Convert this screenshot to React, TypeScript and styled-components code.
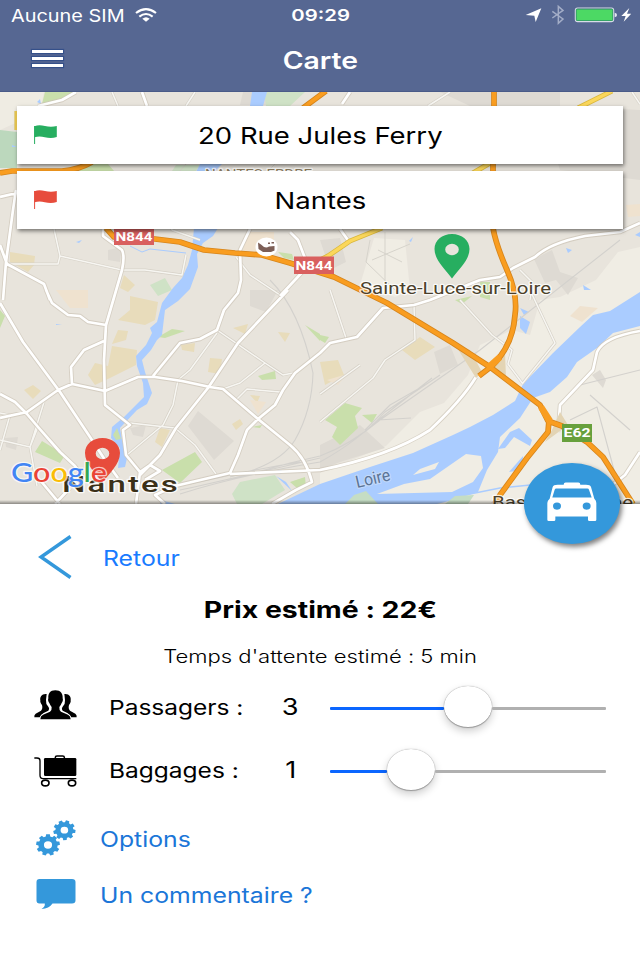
import { ReactNode, useState } from 'react'
import styled, { createGlobalStyle } from 'styled-components'

const SANS = "Inter, 'Liberation Sans', sans-serif"

interface Range {
  min: number
  max: number
}

const PASSENGERS: Range = { min: 1, max: 5 }
const BAGGAGES: Range = { min: 0, max: 4 }

export function App() {
  const [passengers] = useState(3)
  const [baggages] = useState(1)

  return (
    <>
      <GlobalStyle />
      <Screen>
        <Header>
          <StatusBar>
            <StatusLeft>
              <Text $size={16.8} $stretch={1.185}>
                Aucune SIM
              </Text>
              <WifiIcon />
            </StatusLeft>
            <Text $size={16.4} $weight={600} $origin="center" $stretch={1.24}>
              09:29
            </Text>
            <StatusIcons />
          </StatusBar>
          <NavBar>
            <Burger>
              <i />
              <i />
              <i />
            </Burger>
            <Text as="h1" $size={23.6} $weight={600} $origin="center" $stretch={1.2}>
              Carte
            </Text>
          </NavBar>
        </Header>

        <MapArea>
          <CityMap />
          <Addresses>
            <Address color="#27ae60">20 Rue Jules Ferry</Address>
            <Address color="#e74c3c">Nantes</Address>
          </Addresses>
          <MapEdge />
          <OrderButton aria-label="Commander">
            <TaxiIcon />
          </OrderButton>
        </MapArea>

        <Panel>
          <BackRow>
            <svg width="34" height="44" viewBox="0 0 34 44">
              <path d="M32.5 1.5 3 22 32.5 42.5" fill="none" stroke="#3498db" strokeWidth="3.4" />
            </svg>
            <Text $size={21} $color="#187bff">
              Retour
            </Text>
          </BackRow>
          <Price>
            <Text $size={23} $weight={700} $origin="center" $stretch={1.235}>
              Prix estimé : 22€
            </Text>
          </Price>
          <Wait>
            <Text $size={18} $weight={300} $origin="center" $stretch={1.225}>
              Temps d'attente estimé : 5 min
            </Text>
          </Wait>
          <Quantity icon={<PeopleIcon />} label="Passagers :" value={passengers} range={PASSENGERS} />
          <Quantity icon={<LuggageIcon />} label="Baggages :" value={baggages} range={BAGGAGES} />
          <Links>
            <LinkRow>
              <GearsIcon />
              <Text $size={21} $color="#1b76d8">
                Options
              </Text>
            </LinkRow>
            <LinkRow>
              <CommentIcon />
              <Text $size={21} $color="#1b76d8">
                Un commentaire ?
              </Text>
            </LinkRow>
          </Links>
        </Panel>
      </Screen>
    </>
  )
}

function Address({ color, children }: { color: string; children: ReactNode }) {
  return (
    <AddressCard>
      <svg width="24" height="20" viewBox="0 0 24 20">
        <path d="M.6 1V19" stroke={color} strokeWidth="1" />
        <path d="M.4 1.2C4-.2 7 0 11 1S19 2 22.8 1V12c-4 1.400-8 1.300-12 .2S4 11.200 .4 12.200Z" fill={color} />
      </svg>
      <Text $size={23} $origin="center" $stretch={1.195}>
        {children}
      </Text>
    </AddressCard>
  )
}

function Quantity({ icon, label, value, range }: { icon: ReactNode; label: string; value: number; range: Range }) {
  const ratio = (value - range.min) / (range.max - range.min)

  return (
    <QuantityRow>
      {icon}
      <Text $size={20.5} $stretch={1.195}>
        {label}
      </Text>
      <Value>
        <Text $size={23} $origin="center">
          {value}
        </Text>
      </Value>
      <Slider role="slider" aria-valuemin={range.min} aria-valuemax={range.max} aria-valuenow={value}>
        <Track $color="#0b66ff" style={{ width: `calc((100% - 48px) * ${ratio})` }} />
        <Thumb />
        <Track $color="#b0b0b0" $grow />
      </Slider>
    </QuantityRow>
  )
}

function WifiIcon() {
  return (
    <svg width="22" height="14" viewBox="0 0 66 42">
      <g fill="none" stroke="#fff" strokeWidth="6.5">
        <path d="M3 15Q33-8 63 15" />
        <path d="M13 26Q33 10 53 26" />
      </g>
      <path d="M22 32Q33 23 44 32L33 41Z" fill="#fff" />
    </svg>
  )
}

function StatusIcons() {
  return (
    <svg width="108" height="22" viewBox="0 0 324 66">
      <path d="M8 33 55 13 38 54 34 35Z" fill="#fff" />
      <path d="M88 22 120 45 106 58V7L120 19 88 42" fill="none" stroke="#a3adc7" strokeWidth="4.5" />
      <rect x="157" y="12" width="115" height="41" rx="7" fill="none" stroke="#d8dce8" strokeWidth="3.4" />
      <rect x="160" y="15.500" width="109" height="34" rx="2" fill="#4cd964" stroke="#28a85c" strokeWidth="2" />
      <path d="M275 26q7 1 7 7t-7 7Z" fill="#e5e8f0" />
      <path d="M319 12 295 36H308L302 53 325 29H312Z" fill="#fff" />
    </svg>
  )
}

function TaxiIcon() {
  return (
    <svg width="50" height="39.5" viewBox="0 0 150 118">
      <path
        fillRule="evenodd"
        fill="#fff"
        d="M50 8Q50 1 56 1H94Q100 1 100 8H117Q130 8 132 15L142 50Q148 55 148 63V113Q148 117 144 117H127Q123 117 123 113V103H25V113Q25 117 21 117H5Q1 117 1 113V63Q1 55 8 50L17 15Q19 8 32 8ZM28 19Q24 19 23 23L16 46H134L126 23Q125 19 121 19ZM18 72a12 11 0 1 0 24 0 12 11 0 1 0-24 0ZM107 72a12 11 0 1 0 24 0 12 11 0 1 0-24 0Z"
      />
    </svg>
  )
}

function PeopleIcon() {
  return (
    <svg width="43" height="36" viewBox="0 0 129 108">
      <path d="M38 12C24 10 17 20 19 31C18 37 21 41 24 45Q27 56 21 62L5 71Q0 75 1 82H18Q20 74 29 69L43 62Q48 56 42 49Q35 42 36 30Z" />
      <path d="M91 12C105 10 112 20 110 31C111 37 108 41 105 45Q102 56 108 62L124 71Q129 75 128 82H111Q109 74 100 69L86 62Q81 56 87 49Q94 42 93 30Z" />
      <path
        d="M64 1C48 1 42 11 43 25C41 30 43 36 46 39Q49 47 53 51Q54 61 48 65L27 74Q19 78 19 88H110Q110 78 102 74L81 65Q75 61 76 51Q80 47 83 39C86 36 88 30 86 25C87 11 80 1 64 1Z"
        stroke="#fff"
        strokeWidth="5"
        paintOrder="stroke"
      />
    </svg>
  )
}

function LuggageIcon() {
  return (
    <svg width="43" height="32" viewBox="0 0 129 96">
      <g fill="none" stroke="#000" strokeWidth="4">
        <path d="M1 9H9Q18 9 18 17V61Q18 71 27 71H127" />
        <ellipse cx="34" cy="84" rx="11" ry="8.500" strokeWidth="5" />
        <ellipse cx="114" cy="84" rx="11" ry="8.500" strokeWidth="5" />
        <path d="M64 12V7Q64 3 69 3H86Q91 3 91 7V12" strokeWidth="4.500" />
      </g>
      <rect x="30" y="9" width="97" height="54" rx="4" />
    </svg>
  )
}

function gearPath(cx: number, cy: number, rx: number, ry: number, turn: number) {
  const teeth = 9
  const steps: [number, number][] = [
    [-0.34, 0.8],
    [-0.22, 1],
    [0.22, 1],
    [0.34, 0.8],
  ]
  const points: string[] = []
  for (let i = 0; i < teeth; i++) {
    steps.forEach(([offset, r]) => {
      const a = ((i + offset) / teeth) * Math.PI * 2 + turn
      points.push(`${(cx + Math.sin(a) * rx * r).toFixed(2)} ${(cy - Math.cos(a) * ry * r).toFixed(2)}`)
    })
  }
  const hx = rx * 0.34
  const hy = ry * 0.34
  return `M${points.join('L')}ZM${cx - hx} ${cy}a${hx} ${hy} 0 1 0 ${hx * 2} 0a${hx} ${hy} 0 1 0 ${-hx * 2} 0Z`
}

function GearsIcon() {
  return (
    <svg width="40" height="36" viewBox="0 0 40 36" fill="#3498db" fillRule="evenodd">
      <path d={gearPath(12, 25, 12, 10.8, 0)} />
      <path d={gearPath(28.4, 10.2, 11.2, 10, 0.3)} />
    </svg>
  )
}

function CommentIcon() {
  return (
    <svg width="40" height="30" viewBox="0 0 40 30">
      <path
        d="M3.500 0H36Q39.500 0 39.500 3V21.500Q39.500 24.500 36 24.500H16.500Q13 29.800 5.500 29.900Q9.300 28 8.800 24.500H3.500Q.5 24.500 .5 21.500V3Q.5 0 3.500 0Z"
        fill="#3498db"
      />
    </svg>
  )
}

const MAJOR_ROADS = [
  'M0 303 23 342 60 392 90 437 105 460 118 478',
  'M0 394 15 402 27 414 38 427 60 452 75 466 85 480',
  'M0 418 27 412 58 390 72 384 105 391 138 377 155 377 182 381 210 387 223 389 258 419 290 445Q306 458 312 482L296 490 272 504',
  'M103 229V236L122 250Q125 256 122 270L106 325 104 360 105 405 130 425 123 430 126 455 140 472 136 504',
  'M72 384 71 367 84 350 104 341',
  'M46 290 52 303 68 315 80 316 88 322 106 325',
  'M153 376 180 343 200 339 217 330 224 310 238 293 241 280 240 250 250 229',
  'M288 290 238 343 208 388 176 428 160 455 140 475',
  'M280 296 308 266 298 240 290 232',
  'M258 419 275 405 283 390 295 373 320 353 330 343 357 337 383 308 414 305 430 300 460 288 480 280 500 277 513 268 535 257Q550 243 585 236L620 232 640 223',
  'M258 419 247 430 238 455 230 473 175 486 155 495 165 504',
  'M476 377Q462 400 430 430Q390 456 320 470L230 474',
  'M640 331Q604 337 597 352L593 370 560 405 558 432',
  'M640 452 625 475 606 490',
  'M16 190 13 210 6 262 3 300',
  'M0 245 7 264 44 284 50 300',
  'M0 197 17 193',
  'M38 106 62 100 76 92',
  'M142 92 147 106',
  'M342 104 350 92',
  'M340 229 350 243',
  'M140 472 150 465 160 471 145 480',
  'M40 480 60 504 M70 488 55 504',
]

const MINOR_ROADS = [
  'M54 229 60 256 122 270 145 270 182 275 186 255',
  'M60 256 58 264 7 264',
  'M217 333 190 370 178 380 173 405 163 425 127 455',
  'M217 330 265 363 283 375 293 373',
  'M265 363 240 383 223 389',
  'M130 423 175 428 195 445 216 474',
  'M38 427 30 447 37 486',
  'M30 447 0 440',
  'M44 402 30 447',
  'M0 413 10 415 0 450',
  'M320 422 373 378 385 360 415 340 414 305',
  'M330 290 346 338',
  'M460 300 492 335 512 350 508 364 523 384',
  'M530 290 555 343 522 384',
  'M520 270 532 282 530 300',
  'M428 106 450 92',
  'M236 257 250 275 280 295',
  'M186 106 195 92',
  'M320 394 360 365',
  'M236 400 247 389 280 392',
  'M632 92 640 104',
  'M112 92 118 106',
  'M165 210 172 230 200 240',
]

const RAILS = [
  'M270 280Q300 310 313 373Q312 410 295 440Q280 465 230 477',
  'M180 490Q230 480 290 463L320 456Q350 445 380 420L480 350 620 240',
  'M180 494Q240 475 320 462Q360 440 385 412L440 375',
  'M190 484Q250 470 300 462M190 488 260 472 320 458',
  'M365 430 390 405 425 385M372 425 400 403 432 378M378 420 411 418',
  'M570 420 597 407 614 470M590 395 630 430M580 385 640 370',
]

const TAN_AREAS = [
  'M130 296 158 302 155 320 145 325 118 320 130 310Z',
  'M112 346 137 350 136 365 110 378 95 385 88 375 95 363 108 366Z',
  'M118 330 128 331 126 340 112 344Z',
  'M24 390 33 385 41 391 33 399Z',
  'M10 252 35 256 34 265 28 272 10 262Z',
  'M124 275 135 285 128 292 120 288Z',
  'M181 345 195 343 194 352 182 350Z',
  'M210 358 222 359 220 374 208 372Z',
  'M160 428 170 430 162 447 155 442Z',
  'M233 328 248 324 245 334Z',
  'M278 332 290 333 285 342Z',
  'M402 350 420 337 435 347 415 360Z',
  'M320 362 338 360 344 375 325 385Z',
  'M232 424 240 419 243 424 236 430Z',
  'M250 395 260 396 257 403Z',
]

const GREEN_AREAS = [
  'M45 92H76L62 99 42 104Z',
  'M88 164H108L114 171H70Z',
  'M35 452 42 441 65 455 60 463Z',
  'M162 470 195 452 202 462 180 483Z',
  'M158 337 172 329 185 331 165 338Z',
  'M258 376 275 371 276 379 262 380Z',
  'M290 482 305 477 306 487 298 489Z',
  'M320 335 329 337 325 343 320 340Z',
  'M325 420 345 403 362 408 355 416 358 428 340 445 332 437 337 427Z',
  'M362 415 377 414 372 423Z',
  'M305 325 320 334V341Z',
  'M480 282 490 282 490 300 480 297Z',
  'M455 300 472 296 462 304Z',
  'M278 252 292 254 294 260 284 258Z',
  'M252 427 262 425 260 428Z',
  'M0 310 5 316 0 328Z',
]

const GREY_AREAS = [
  'M188 426 198 411 234 441 214 460Z',
  'M108 250 122 247 120 262 108 260Z',
  'M250 290 278 290 266 312 250 306Z',
  'M130 428 146 425 143 437 133 435Z',
  'M5 438 18 437 16 450 6 447Z',
  'M243 92H300L285 105H240Z',
  'M440 92H560V106H470Z',
  'M534 259 552 250 560 272 578 278 568 295 556 280 545 283Z',
  'M434 352 450 345 458 365 440 374Z',
  'M320 445 360 425 385 448 340 462 320 470Z',
  'M540 105 640 110V180L560 170Z',
  'M592 375 600 370 606 380 603 388Z',
  'M320 240 340 238 346 262 330 270Z',
]

const ORANGE_ROADS = [
  'M0 173 12 171H62Q78 170 92 162',
  'M106 228 114 237 155 239 180 242 204 250 235 253 262 255 290 263 334 277 387 303 453 343 490 367 540 405 548 421 562 426 587 442 603 457 633 504',
  'M549 420 548 432 527 458 500 495 494 504',
  'M494 92V106M493 164V171M493 228Q496 245 507 270T515 315Q513 345 492 366L479 376',
  'M326 91 303 108',
]

const YELLOW_ROADS = ['M612 91 578 108', 'M490 163 473 173', 'M382 228 350 241 328 256 320 260', 'M17 111V130']

function Strokes({ paths, color, width, opacity = 1 }: { paths: string[]; color: string; width: number; opacity?: number }) {
  return (
    <path d={paths.join('')} fill="none" stroke={color} strokeWidth={width} strokeOpacity={opacity} strokeLinejoin="round" />
  )
}

function Badge({ x, y, width, height, color, label }: { x: number; y: number; width: number; height: number; color: string; label: string }) {
  return (
    <g>
      <rect x={x} y={y} width={width} height={height} fill={color} />
      <text
        x={x + 1.5}
        y={y + height / 2 + 4.4}
        textLength={width - 3}
        lengthAdjust="spacingAndGlyphs"
        fontFamily="Roboto, sans-serif"
        fontWeight="700"
        fontSize="12.5"
        fill="#fff"
      >
        {label}
      </text>
    </g>
  )
}

function Pin({ x, y, color }: { x: number; y: number; color: string }) {
  return (
    <path
      transform={`translate(${x} ${y})`}
      fillRule="evenodd"
      fill={color}
      d="M0 0C-10 0-17.500 6.500-17.500 15C-17.500 26-7 35-0 44.500C7 35 17.500 26 17.500 15C17.500 6.500 10 0 0 0ZM-6.800 15.500a6.800 5.700 0 1 0 13.600 0a6.800 5.700 0 1 0-13.600 0Z"
    />
  )
}

function CityMap() {
  return (
    <MapSvg viewBox="0 92 640 412">
      <rect y="92" width="640" height="412" fill="#e8e4dc" />
      <path d="M0 92H44L40 112 0 130Z" fill="#efece3" />
      <path d="M0 130 17 132V168H0Z" fill="#bcd8bd" />
      <path
        d="M640 247 618 252 596 280 560 297 540 300 530 335 512 330 480 345 468 375 444 403 420 412 386 446 320 473V504H640ZM374 238 405 240 410 290 395 297 360 285Z"
        fill="#f0ede4"
      />
      <path d="M505 102 540 92 552 98 530 105Z" fill="#efece3" />
      <path d={GREY_AREAS.join('')} fill="#dedad3" />
      <path d={TAN_AREAS.join('')} fill="#e8dcbb" />
      <path
        d="M56 290 88 290 88 308 70 308ZM248 232H274V248L255 254 243 250ZM570 316 580 306 598 308 582 322ZM250 400 266 402 258 414ZM327 380 347 374 338 385ZM626 205 640 204V216L628 217Z"
        fill="#efe2cf"
      />
      <path d={GREEN_AREAS.join('')} fill="#c9dfab" />
      <path
        d="M232 494 240 482 275 475 285 490 262 504H237ZM264 92H305L290 106H266ZM176 165H200L196 171H172ZM150 285 165 278 172 290 158 296Z"
        fill="#cfe2c6"
      />

      <g fill="#aaccff">
        <path d="M252 92H267L263 106H250Z" />
        <path d="M200 164H222L214 172H196Z" />
        <path d="M194 228H218L213 236 203 243 197 254 198 267 190 289 178 301 165 310 162 335 157 340 151 350 142 360 145 372 152 393 147 404 137 410 120 428 122 440 127 458 125 467 118 468 120 448 111 438 112 427 124 417 144 397 143 383 137 366 136 356 146 345 152 333 150 328 157 322 162 303 173 288 182 278 188 265 192 250Z" />
        <path
          fillRule="evenodd"
          d="M640 292 610 311 593 315 580 327 553 353 523 384 515 401 493 415 470 427 453 435 413 453 370 467 320 484 278 504H437L453 500 478 492 487 470 498 452 500 437 520 418 533 398 550 392 567 377 577 362 597 348 613 333 640 326ZM481 456 466 454 453 463 430 479 404 484 377 494 452 492 473 482 483 468ZM413 475 420 469 439 462 435 469Z"
        />
        <path d="M519 428 532 440 530 446 514 437 505 448 498 449 510 432ZM509 472 523 456 522 470ZM520 316 530 322 526 334 520 328ZM520 308 529 312 524 315Z" />
        <path d="M277 470 282 470 281 474ZM286 482 276 476 292 491ZM161 500 175 504H160ZM583 285 591 290 584 290ZM566 248 572 250 568 253ZM635 235 640 232V237ZM76 242 82 240 79 243ZM12 145 17 147H12ZM56 324 62 325H56ZM37 102 40 99 41 104ZM409 241 413 237 411 242Z" />
        <path d="M130 246 142 252 150 249 186 253" fill="none" stroke="#aaccff" strokeWidth="1" />
        <path d="M460 496 500 488 560 482" fill="none" stroke="#aaccff" strokeWidth="1.500" />
      </g>
      <path d="M113 435 117 428 121 439 116 440Z" fill="#c9dfab" />
      <path d="M345 504 354 495 366 491 378 504ZM445 504 455 496 474 495 468 504Z" fill="#c5ddc4" />

      <Strokes paths={RAILS} color="#d3d1cd" width={1.1} />
      <Strokes
        paths={['M372 260 410 244M370 240 366 262 395 290M378 250 402 262M385 232V290M180 171 186 164M268 171 275 164']}
        color="#d6d3cb"
        width={1}
      />
      <Strokes paths={MINOR_ROADS} color="#d6d1c7" width={2.8} />
      <Strokes paths={MINOR_ROADS} color="#f7f6f2" width={1.5} />
      <Strokes paths={MAJOR_ROADS} color="#cdc6b8" width={4.4} opacity={0.75} />
      <Strokes paths={MAJOR_ROADS} color="#fff" width={2.7} />
      <path
        d="M454 343 470 350 482 372 476 378ZM492 362 505 352 506 378 497 372ZM560 412 568 425 545 442 552 430Z"
        fill="#e3d4b4"
      />
      <Strokes paths={YELLOW_ROADS} color="#d9b73c" width={5} />
      <Strokes paths={YELLOW_ROADS} color="#fbd75b" width={3.4} />
      <Strokes paths={ORANGE_ROADS} color="#d6851c" width={5.7} />
      <Strokes paths={ORANGE_ROADS} color="#f99d20" width={4} />
      <path d="M490 366 500 357M541 407 550 421" stroke="#f99d20" strokeWidth="6.500" />

      <ellipse cx="266.500" cy="247" rx="11" ry="9.500" fill="#fff" />
      <path
        d="M258 242.500 261 244.500Q265 249 269 246.500L274.500 246V250.500L271 252H263L258.500 249ZM268 242.500H270V244H268ZM271.500 242H274V243.500H271.500Z"
        fill="#7d5f57"
      />
      <Badge x={114} y={229} width={40} height={16} color="#d9605f" label="N844" />
      <Badge x={294} y={256.5} width={40} height={17.5} color="#d9605f" label="N844" />
      <Badge x={562} y={424} width={30} height={18} color="#67a03c" label="E62" />

      <g
        fontFamily="Roboto, sans-serif"
        fill="#4b3f2a"
        stroke="#fff"
        strokeOpacity=".8"
        strokeWidth="2.400"
        paintOrder="stroke"
        strokeLinejoin="round"
      >
        <text x="205" y="178" fontSize="13" textLength="107" lengthAdjust="spacingAndGlyphs" fill="#8b7a5c">
          NANTES ERDRE
        </text>
        <text x="360" y="293.500" fontSize="17" textLength="191" lengthAdjust="spacingAndGlyphs">
          Sainte-Luce-sur-Loire
        </text>
        <text x="492" y="508" fontSize="17" textLength="141" lengthAdjust="spacingAndGlyphs">
          Basse-Goulaine
        </text>
        <text
          x="62"
          y="492"
          fontSize="22.500"
          fontWeight="500"
          letterSpacing="1.500"
          textLength="118"
          lengthAdjust="spacingAndGlyphs"
          fill="#3b3018"
        >
          Nantes
        </text>
        <text
          transform="translate(357 488) rotate(-13)"
          fontSize="17"
          textLength="35"
          lengthAdjust="spacingAndGlyphs"
          fill="#5b7496"
          stroke="#c9dcf8"
        >
          Loire
        </text>
      </g>

      <Pin x={452} y={234} color="#27ae60" />
      <Pin x={102.5} y={438} color="#e74c3c" />

      <text
        x="11"
        y="481.500"
        fontFamily="Lato, sans-serif"
        fontSize="26.500"
        fontWeight="500"
        textLength="96"
        lengthAdjust="spacingAndGlyphs"
        stroke="#fff"
        strokeOpacity=".7"
        strokeWidth="2.500"
        paintOrder="stroke"
        strokeLinejoin="round"
      >
        <tspan fill="#4285f4">G</tspan>
        <tspan fill="#ea4335">o</tspan>
        <tspan fill="#fbbc05">o</tspan>
        <tspan fill="#4285f4">g</tspan>
        <tspan fill="#34a853">l</tspan>
        <tspan fill="#ea4335">e</tspan>
      </text>
    </MapSvg>
  )
}

const GlobalStyle = createGlobalStyle`
  * {
    box-sizing: border-box;
  }

  body {
    margin: 0;
    background: #fff;
    font-family: ${SANS};
  }
`

const Screen = styled.div`
  width: 640px;
  height: 960px;
  display: flex;
  flex-direction: column;
  overflow: hidden;
`

// Wide lettering: glyphs keep their height and are stretched sideways
const Text = styled.span<{ $size: number; $weight?: number; $color?: string; $origin?: 'left' | 'center'; $stretch?: number }>`
  display: block;
  margin: 0;
  padding-top: 3px;
  font-size: ${({ $size }) => $size}px;
  font-weight: ${({ $weight = 400 }) => $weight};
  line-height: 1.2;
  white-space: nowrap;
  color: ${({ $color = 'inherit' }) => $color};
  transform: scaleX(${({ $stretch = 1.18 }) => $stretch});
  transform-origin: ${({ $origin = 'left' }) => $origin};
`

const Header = styled.header`
  height: 92px;
  flex-shrink: 0;
  background: #566792;
  border-bottom: 1px solid #4a5b88;
  color: #fff;
`

const StatusBar = styled.div`
  height: 29px;
  padding: 0 9px 0 11px;
  display: grid;
  grid-template-columns: 1fr auto 1fr;
  align-items: center;

  > :last-child {
    justify-self: end;
  }
`

const StatusLeft = styled.div`
  display: flex;
  align-items: center;
  gap: 28px;
`

const NavBar = styled.div`
  height: 62px;
  padding: 0 32px;
  display: grid;
  grid-template-columns: 1fr auto 1fr;
  align-items: center;
`

const Burger = styled.div`
  width: 31px;
  margin-bottom: 3px;
  display: flex;
  flex-direction: column;
  gap: 4px;

  i {
    height: 3px;
    background: #fff;
    box-shadow: 0 0 1px 1px #35508a;
  }
`

const MapArea = styled.section`
  position: relative;
  height: 412px;
  flex-shrink: 0;
`

const MapSvg = styled.svg`
  position: absolute;
  inset: 0;
  width: 640px;
  height: 412px;
`

const MapEdge = styled.div`
  position: absolute;
  inset: auto 0 0;
  height: 4px;
  background: linear-gradient(rgba(0, 0, 0, 0), rgba(0, 0, 0, 0.4));
`

const Addresses = styled.div`
  position: relative;
  padding: 14px 17px;
  display: flex;
  flex-direction: column;
  gap: 7px;
`

const AddressCard = styled.div`
  height: 58px;
  padding: 0 17px;
  display: grid;
  grid-template-columns: 1fr auto 1fr;
  align-items: center;
  background: #fff;
  box-shadow: 1px 2px 4px rgba(0, 0, 0, 0.5);
`

const OrderButton = styled.button`
  position: absolute;
  right: 20px;
  bottom: -40px;
  width: 96px;
  height: 81px;
  padding: 0 0 3px;
  display: flex;
  align-items: center;
  justify-content: center;
  border: 0;
  border-radius: 50%;
  background: #3498db;
  box-shadow: 2px 3px 5px rgba(0, 0, 0, 0.5);
`

const Panel = styled.main`
  flex: 1;
  padding-top: 20px;
  background: #fff;
  color: #000;
  font-feature-settings: 'calt' 0;
`

const BackRow = styled.div`
  height: 66px;
  padding-left: 38px;
  display: flex;
  align-items: center;
  gap: 31px;
`

const Price = styled.div`
  height: 38px;
  display: flex;
  align-items: center;
  justify-content: center;
`

const Wait = styled.div`
  height: 47px;
  padding-top: 7px;
  display: flex;
  align-items: center;
  justify-content: center;
`

const QuantityRow = styled.div`
  height: 63px;
  padding-left: 34px;
  display: grid;
  grid-template-columns: 75px 152px 59px 276px;
  align-items: center;

  > svg {
    margin-top: 3px;
  }
`

const Value = styled.div`
  display: flex;
  justify-content: center;
`

const Slider = styled.div`
  margin-left: 10px;
  width: 276px;
  display: flex;
  align-items: center;
`

const Track = styled.div<{ $color: string; $grow?: boolean }>`
  height: 3px;
  margin-top: 3px;
  flex: ${({ $grow }) => ($grow ? '1' : 'none')};
  border-radius: 1px;
  background: ${({ $color }) => $color};
`

const Thumb = styled.div`
  width: 48px;
  height: 41px;
  flex-shrink: 0;
  border-radius: 50%;
  background: #fff;
  box-shadow:
    0 0 1px rgba(0, 0, 0, 0.45),
    0 1px 1px rgba(0, 0, 0, 0.25),
    0 4px 8px rgba(0, 0, 0, 0.2);
`

const Links = styled.div`
  padding: 9px 0 0 36px;
`

const LinkRow = styled.div`
  height: 56px;
  display: flex;
  align-items: center;
  gap: 24px;
`

export default App
